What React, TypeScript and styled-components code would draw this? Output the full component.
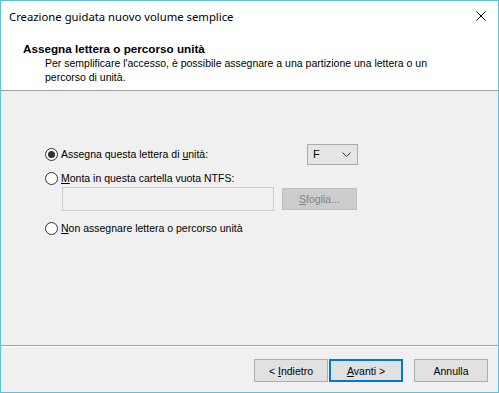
import React from "react";
import styled, { createGlobalStyle } from "styled-components";

const Global = createGlobalStyle`
  html, body { margin: 0; padding: 0; background: #ffffff; }
  body { font-family: "Liberation Sans", Arial, sans-serif; font-size: 10.5px; color: #000; }
  * { box-sizing: border-box; }
`;

const Window = styled.div`
  width: 499px;
  height: 393px;
  border: 1px solid #5bc4d8;
  display: flex;
  flex-direction: column;
  background: #f0f0f0;
`;

const TitleBar = styled.div`
  height: 30px;
  background: #fff;
  display: flex;
  align-items: center;
  justify-content: space-between;
  padding: 0 12px 0 8px;
  font-family: "Noto Sans", "Liberation Sans", sans-serif;
  font-size: 11.3px;
`;

const Header = styled.div`
  height: 60px;
  background: #fff;
  border-bottom: 1px solid #a0a0a0;
  padding: 10px 0 0 22px;
`;

const Heading = styled.div`
  font-weight: bold;
  font-size: 11.7px;
  line-height: 15px;
`;

const Desc = styled.div`
  padding-left: 22px;
  line-height: 14px;
  white-space: nowrap;
`;

const Body = styled.div`
  flex: 1;
  padding: 55px 0 0 44px;
  display: flex;
  flex-direction: column;
`;

const OptionRow = styled.div<{ $mt?: number }>`
  display: flex;
  align-items: center;
  height: 16px;
  margin-top: ${(p) => p.$mt ?? 0}px;
  width: 313px;
`;

const Radio = styled.span<{ $checked?: boolean }>`
  width: 13px;
  height: 13px;
  border-radius: 50%;
  border: 1px solid #333;
  background: #fff;
  display: inline-flex;
  align-items: center;
  justify-content: center;
  margin-right: 3px;
  flex-shrink: 0;
  &::after {
    content: "";
    width: 7px;
    height: 7px;
    border-radius: 50%;
    background: ${(p) => (p.$checked ? "#333" : "transparent")};
  }
`;

const Label = styled.span`
  flex: 1;
  white-space: nowrap;
`;

const Combo = styled.div`
  width: 51px;
  height: 21px;
  background: #e5e5e5;
  border: 1px solid #acacac;
  display: flex;
  align-items: center;
  justify-content: space-between;
  padding: 0 6px 0 5px;
  font-size: 11px;
`;

const PathRow = styled.div`
  display: flex;
  align-items: center;
  margin: 1px 0 0 17px;
`;

const PathInput = styled.div`
  width: 212px;
  height: 24px;
  background: #f0f0f0;
  border: 1px solid #cccccc;
`;

const Sfoglia = styled.div`
  margin-left: 8px;
  width: 75px;
  height: 22px;
  background: #cccccc;
  border: 1px solid #bfbfbf;
  color: #838383;
  display: flex;
  align-items: center;
  justify-content: center;
`;

const Footer = styled.div`
  height: 47px;
  border-top: 1px solid #a0a0a0;
  box-shadow: inset 0 1px 0 #fff;
  display: flex;
  justify-content: flex-end;
  padding: 13px 10px 0 0;
`;

const Button = styled.div<{ $default?: boolean; $ml?: number }>`
  width: 74px;
  height: 23px;
  background: #e1e1e1;
  border: ${(p) => (p.$default ? "2px solid #0078d7" : "1px solid #adadad")};
  display: flex;
  align-items: center;
  justify-content: center;
  margin-left: ${(p) => p.$ml ?? 0}px;
`;

const U = styled.span`
  text-decoration: underline;
`;

export default function App() {
  return (
    <>
      <Global />
      <Window>
        <TitleBar>
          <span>Creazione guidata nuovo volume semplice</span>
          <svg width="10" height="10" viewBox="0 0 10 10">
            <path d="M0.5 0.5 L9.5 9.5 M9.5 0.5 L0.5 9.5" stroke="#000" strokeWidth="1" />
          </svg>
        </TitleBar>
        <Header>
          <Heading>Assegna lettera o percorso unità</Heading>
          <Desc>
            Per semplificare l'accesso, è possibile assegnare a una partizione una lettera o un
            <br />
            percorso di unità.
          </Desc>
        </Header>
        <Body>
          <OptionRow>
            <Radio $checked />
            <Label>
              Assegna questa lettera di <U>u</U>nità:
            </Label>
            <Combo>
              <span>F</span>
              <svg width="9" height="5" viewBox="0 0 9 5">
                <path d="M0.5 0.5 L4.5 4.5 L8.5 0.5" stroke="#333" fill="none" strokeWidth="1" />
              </svg>
            </Combo>
          </OptionRow>
          <OptionRow $mt={8}>
            <Radio />
            <Label>
              <U>M</U>onta in questa cartella vuota NTFS:
            </Label>
          </OptionRow>
          <PathRow>
            <PathInput />
            <Sfoglia>
              <span>
                <U>S</U>foglia...
              </span>
            </Sfoglia>
          </PathRow>
          <OptionRow $mt={9}>
            <Radio />
            <Label>
              <U>N</U>on assegnare lettera o percorso unità
            </Label>
          </OptionRow>
        </Body>
        <Footer>
          <Button>
            <span>
              &lt; <U>I</U>ndietro
            </span>
          </Button>
          <Button $default $ml={1}>
            <span>
              <U>A</U>vanti &gt;
            </span>
          </Button>
          <Button $ml={11}>Annulla</Button>
        </Footer>
      </Window>
    </>
  );
}
